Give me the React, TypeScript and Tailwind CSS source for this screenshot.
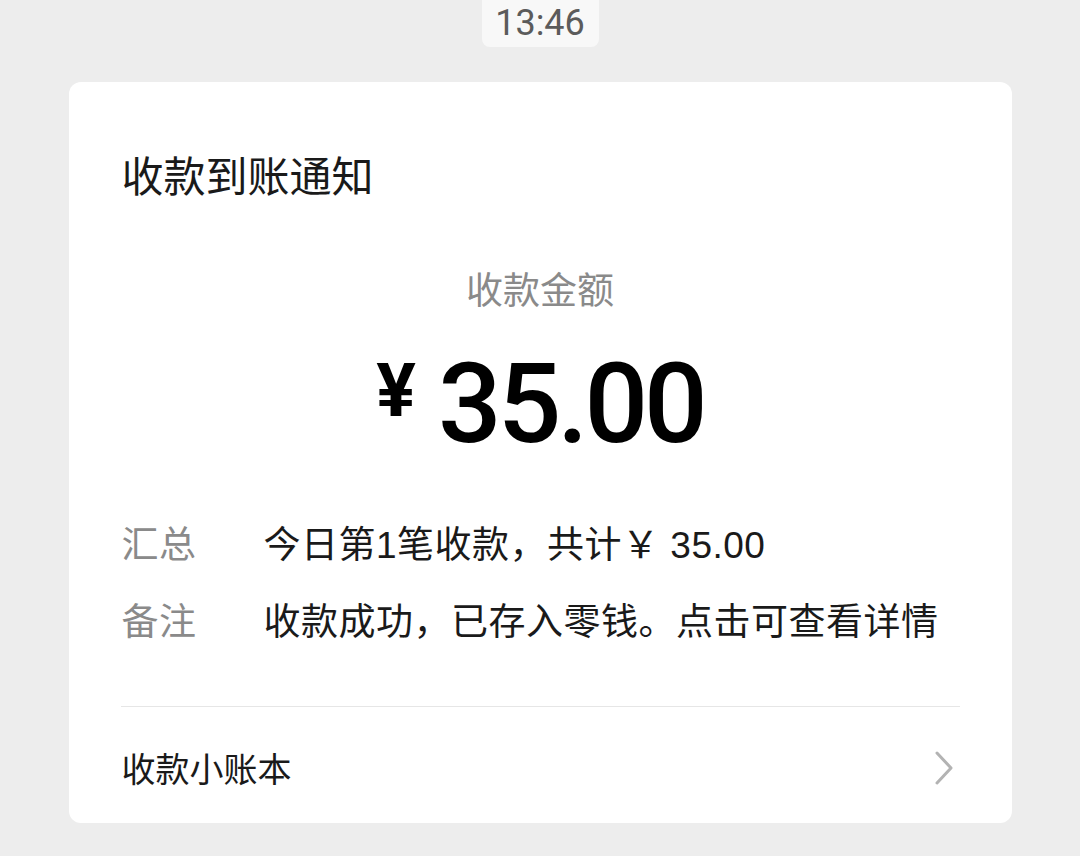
import React from 'react';

const cjk = { fontFamily: '"Noto Sans CJK SC", "Noto Sans", sans-serif' };
const mixed = { fontFamily: '"Liberation Sans", "Noto Sans CJK SC", sans-serif' };

const rows = [
  { label: '汇总', value: '今日第1笔收款，共计￥ 35.00' },
  { label: '备注', value: '收款成功，已存入零钱。点击可查看详情' },
];

const App: React.FC = () => {
  return (
    <div className="w-[1080px] h-[856px] bg-[#ededed] overflow-hidden" style={cjk}>
      {/* time stamp */}
      <div className="flex justify-center">
        <div
          className="mt-[-8px] h-[55px] w-[117px] rounded-[8px] bg-[#f8f8f8] flex items-center justify-center pt-[7px] text-[36px] text-[#5b5b5b]"
          style={{ fontFamily: 'Roboto, "Noto Sans", sans-serif' }}
        >
          13:46
        </div>
      </div>

      {/* card */}
      <div className="mx-auto mt-[35px] w-[943px] h-[741px] rounded-[12px] bg-white px-[52px] pt-[72px] flex flex-col">
        <div className="h-[40px] leading-[40px] text-[42px] text-[#1a1a1a] pl-[1px]">收款到账通知</div>

        <div className="mt-[76px] h-[36px] leading-[36px] text-[37px] text-[#8a8a8a] text-center">收款金额</div>

        <div
          className="mt-[42px] flex justify-center items-start gap-[22px] text-black"
          style={{ fontFamily: 'Roboto, "Liberation Sans", sans-serif' }}
        >
          <span className="h-[112px] leading-[112px] text-[74px] font-bold pt-[3px] mt-[-16px]">¥</span>
          <span className="h-[112px] leading-[112px] text-[112px] font-medium tracking-[-4px]">35.00</span>
        </div>

        <div className="mt-[64px] flex flex-col gap-[41px]">
          {rows.map((r) => (
            <div key={r.label} className="flex items-baseline h-[36px] leading-[36px] text-[37px] tracking-[0.5px]">
              <div className="w-[143px] shrink-0 pl-[1px] text-[#8a8a8a]">{r.label}</div>
              <div className="text-[#1a1a1a] whitespace-nowrap" style={mixed}>{r.value}</div>
            </div>
          ))}
        </div>

        <div className="mt-[69px] h-px bg-[#e6e6e6]" />

        <div className="h-[116px] pt-[6px] flex items-center justify-between">
          <div className="pl-[1px] text-[34px] leading-[36px] text-[#1a1a1a]">收款小账本</div>
          <svg width="20" height="34" viewBox="0 0 20 34" className="mr-[6px]">
            <path d="M3 2 L17 17 L3 32" fill="none" stroke="#b3b3b3" strokeWidth="3" strokeLinecap="round" strokeLinejoin="round" />
          </svg>
        </div>
      </div>
    </div>
  );
};

export default App;
